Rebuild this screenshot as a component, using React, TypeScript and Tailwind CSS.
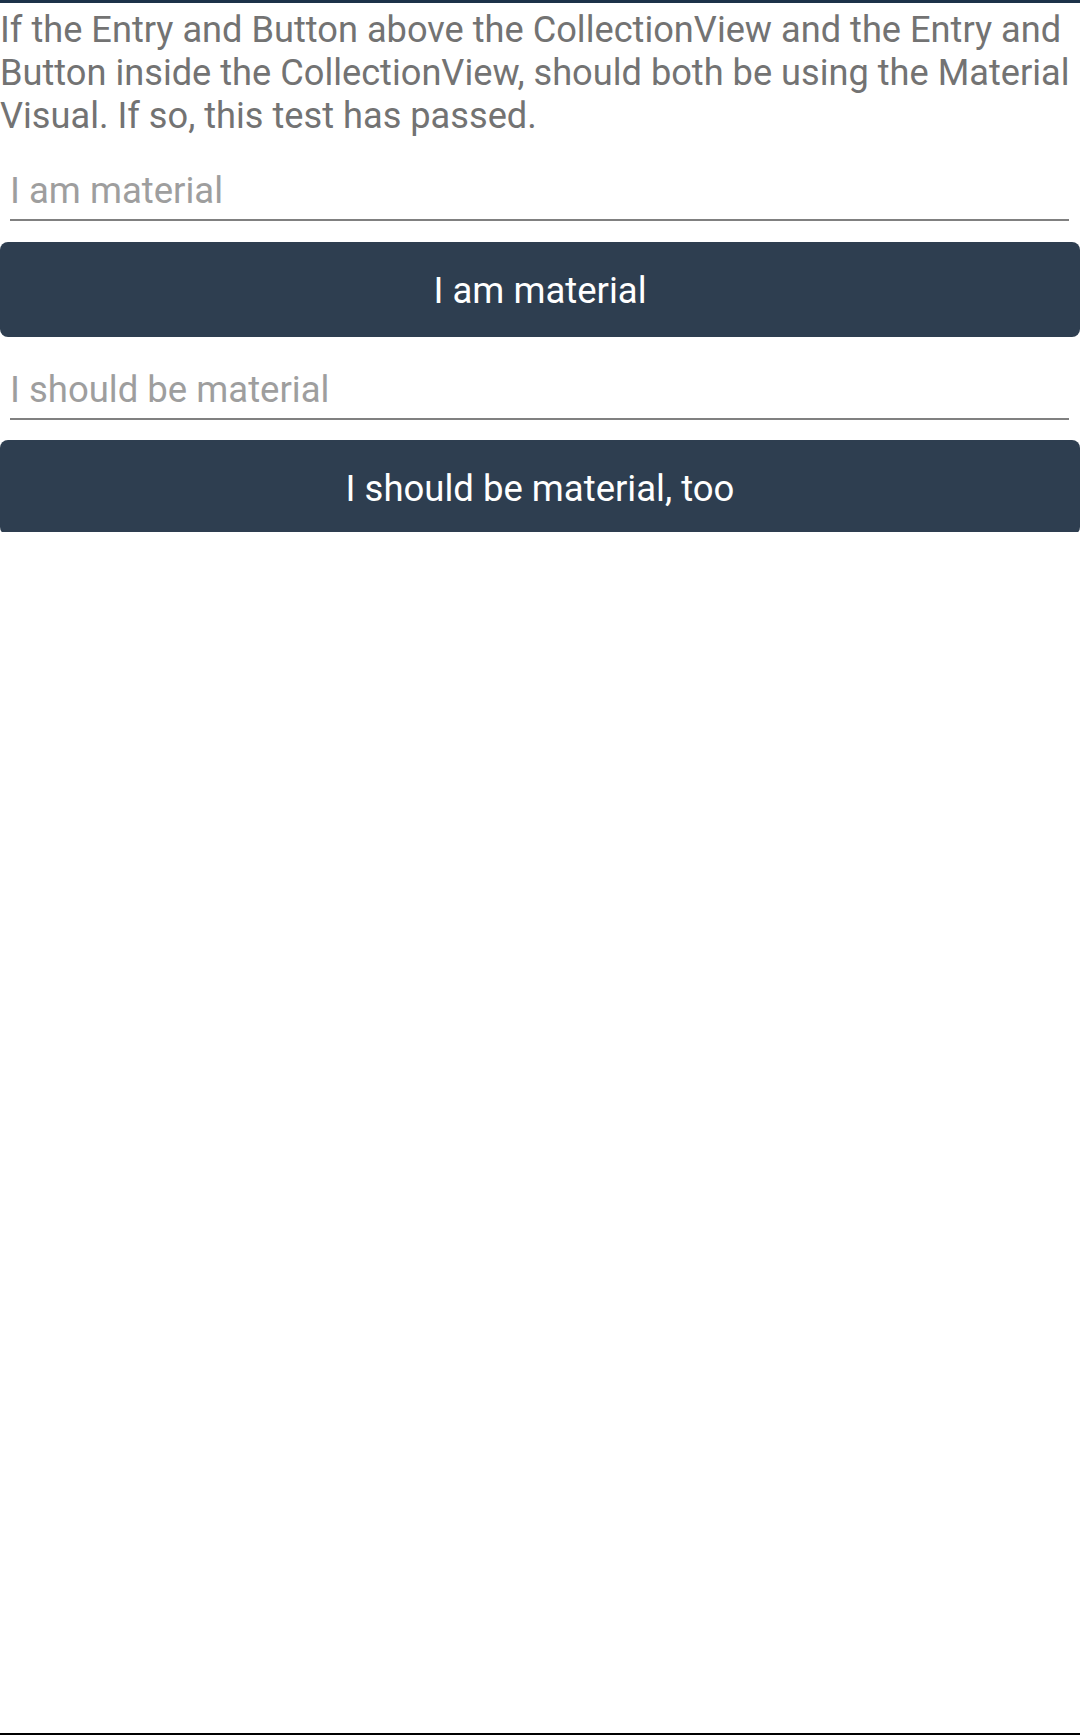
export default function App() {
  return (
    <div className="w-[1080px] h-[1735px] bg-white flex flex-col font-['Roboto',_'Noto_Sans',_sans-serif] overflow-hidden">
      <div className="h-[3px] bg-[#1d3249] shrink-0" />
      <p className="mt-[5px] text-[36.2px] leading-[43px] text-[#737373]">
        If the Entry and Button above the CollectionView and the Entry and Button inside the CollectionView, should both be using the Material Visual. If so, this test has passed.
      </p>

      <div className="mt-[32px] ml-[10px] mr-[11px]">
        <div className="text-[36.5px] leading-[43px] text-[#9e9e9e]">I am material</div>
        <div className="mt-[7px] h-[2px] bg-[#808080]" />
      </div>
      <button className="mt-[21px] h-[95px] w-full rounded-[8px] bg-[#2e3e50] pt-[4px] text-white text-[36.5px] flex items-center justify-center">
        I am material
      </button>

      <div className="mt-[31px] ml-[10px] mr-[11px]">
        <div className="text-[36.5px] leading-[43px] text-[#9e9e9e]">I should be material</div>
        <div className="mt-[7px] h-[2px] bg-[#808080]" />
      </div>
      <div className="mt-[20px] h-[92px] overflow-hidden shrink-0">
        <button className="h-[95px] w-full rounded-[8px] bg-[#2e3e50] pt-[4px] text-white text-[36.5px] flex items-center justify-center">
          I should be material, too
        </button>
      </div>

      <div className="mt-auto h-[2px] bg-black shrink-0" />
    </div>
  );
}
